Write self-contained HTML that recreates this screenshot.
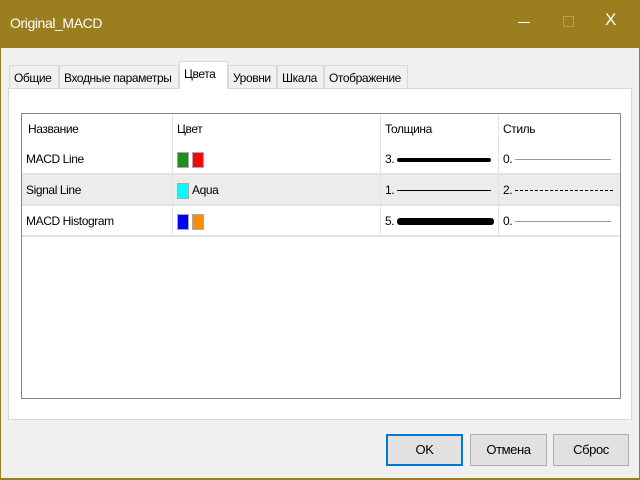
<!DOCTYPE html>
<html><head><meta charset="utf-8"><style>
*{margin:0;padding:0;box-sizing:border-box}
body{width:640px;height:480px;background:#9b7f1e;font-family:"Liberation Sans",sans-serif;font-size:12px;color:#000;position:relative;overflow:hidden;letter-spacing:-0.4px}
.abs{position:absolute}
.title{left:10px;top:15px;color:#fff;font-size:14px}
.body{left:1px;top:48px;width:638px;height:430px;background:#f0f0f0}
.tab{top:65px;height:23px;border:1px solid #d9d9d9;border-bottom:none;background:#f0f0f0;padding:5px 4px 0}
.panel{left:8px;top:88px;width:624px;height:332px;background:#fff;border:1px solid #d9d9d9}
.list{left:21px;top:113px;width:600px;height:286px;border:1px solid #828790;background:#fff}
.row{position:absolute;left:0;width:598px;height:31px;border-bottom:2px solid #e3e3e3}
.c{position:absolute;top:0;height:100%;border-left:1px solid #e3e3e3;line-height:30px;padding-left:4px}
.sw{display:inline-block;width:12px;height:16px;vertical-align:middle;margin-right:3px;border:1px solid #aaa}
.ln{display:inline-block;vertical-align:middle;background:#000}
.btn{top:434px;height:32px;background:#e1e1e1;border:1px solid #adadad;text-align:center;line-height:30px;font-size:13px}
</style></head><body>
<div class="abs title">Original_MACD</div>
<div class="abs" style="left:518px;top:22px;width:12px;height:1px;background:#fff"></div>
<div class="abs" style="left:563px;top:16px;width:11px;height:11px;border:1px solid #b9a15a"></div>
<div class="abs" style="left:605px;top:10px;color:#fff;font-size:17px">X</div>
<div class="abs body"></div>
<div class="abs panel"></div>
<div class="abs tab" style="left:9px;width:50px">Общие</div>
<div class="abs tab" style="left:59px;width:120px">Входные параметры</div>
<div class="abs tab" style="left:179px;top:61px;height:28px;width:49px;background:#fff;padding-top:5px">Цвета</div>
<div class="abs tab" style="left:228px;width:49px">Уровни</div>
<div class="abs tab" style="left:277px;width:47px">Шкала</div>
<div class="abs tab" style="left:324px;width:84px">Отображение</div>
<div class="abs list">
 <div class="row" style="top:0;height:30px;border-bottom:none">
  <div class="c" style="left:0;border:none;padding-left:6px">Название</div>
  <div class="c" style="left:150px">Цвет</div>
  <div class="c" style="left:358px">Толщина</div>
  <div class="c" style="left:476px">Стиль</div>
 </div>
 <div class="row" style="top:30px">
  <div class="c" style="left:0;border:none">MACD Line</div>
  <div class="c" style="left:150px"><span class="sw" style="background:#228b22"></span><span class="sw" style="background:#f00"></span></div>
  <div class="c" style="left:358px">3. <span class="ln" style="width:94px;height:4px;border-radius:2px"></span></div>
  <div class="c" style="left:476px">0. <span class="ln" style="width:96px;height:1px;background:#999"></span></div>
 </div>
 <div class="row" style="top:61px;background:#ececec">
  <div class="c" style="left:0;border:none">Signal Line</div>
  <div class="c" style="left:150px"><span class="sw" style="background:#0ff"></span>Aqua</div>
  <div class="c" style="left:358px">1. <span class="ln" style="width:94px;height:1px"></span></div>
  <div class="c" style="left:476px">2. <span class="ln" style="width:98px;height:0;border-top:1px dashed #000;background:none"></span></div>
 </div>
 <div class="row" style="top:92px">
  <div class="c" style="left:0;border:none">MACD Histogram</div>
  <div class="c" style="left:150px"><span class="sw" style="background:#00f"></span><span class="sw" style="background:#ff8c00"></span></div>
  <div class="c" style="left:358px">5. <span class="ln" style="width:97px;height:7px;border-radius:3px"></span></div>
  <div class="c" style="left:476px">0. <span class="ln" style="width:96px;height:1px;background:#999"></span></div>
 </div>
</div>
<div class="abs btn" style="left:386px;width:77px;border:2px solid #0078d7;line-height:28px">OK</div>
<div class="abs btn" style="left:470px;width:77px">Отмена</div>
<div class="abs btn" style="left:553px;width:76px">Сброс</div>
</body></html>
